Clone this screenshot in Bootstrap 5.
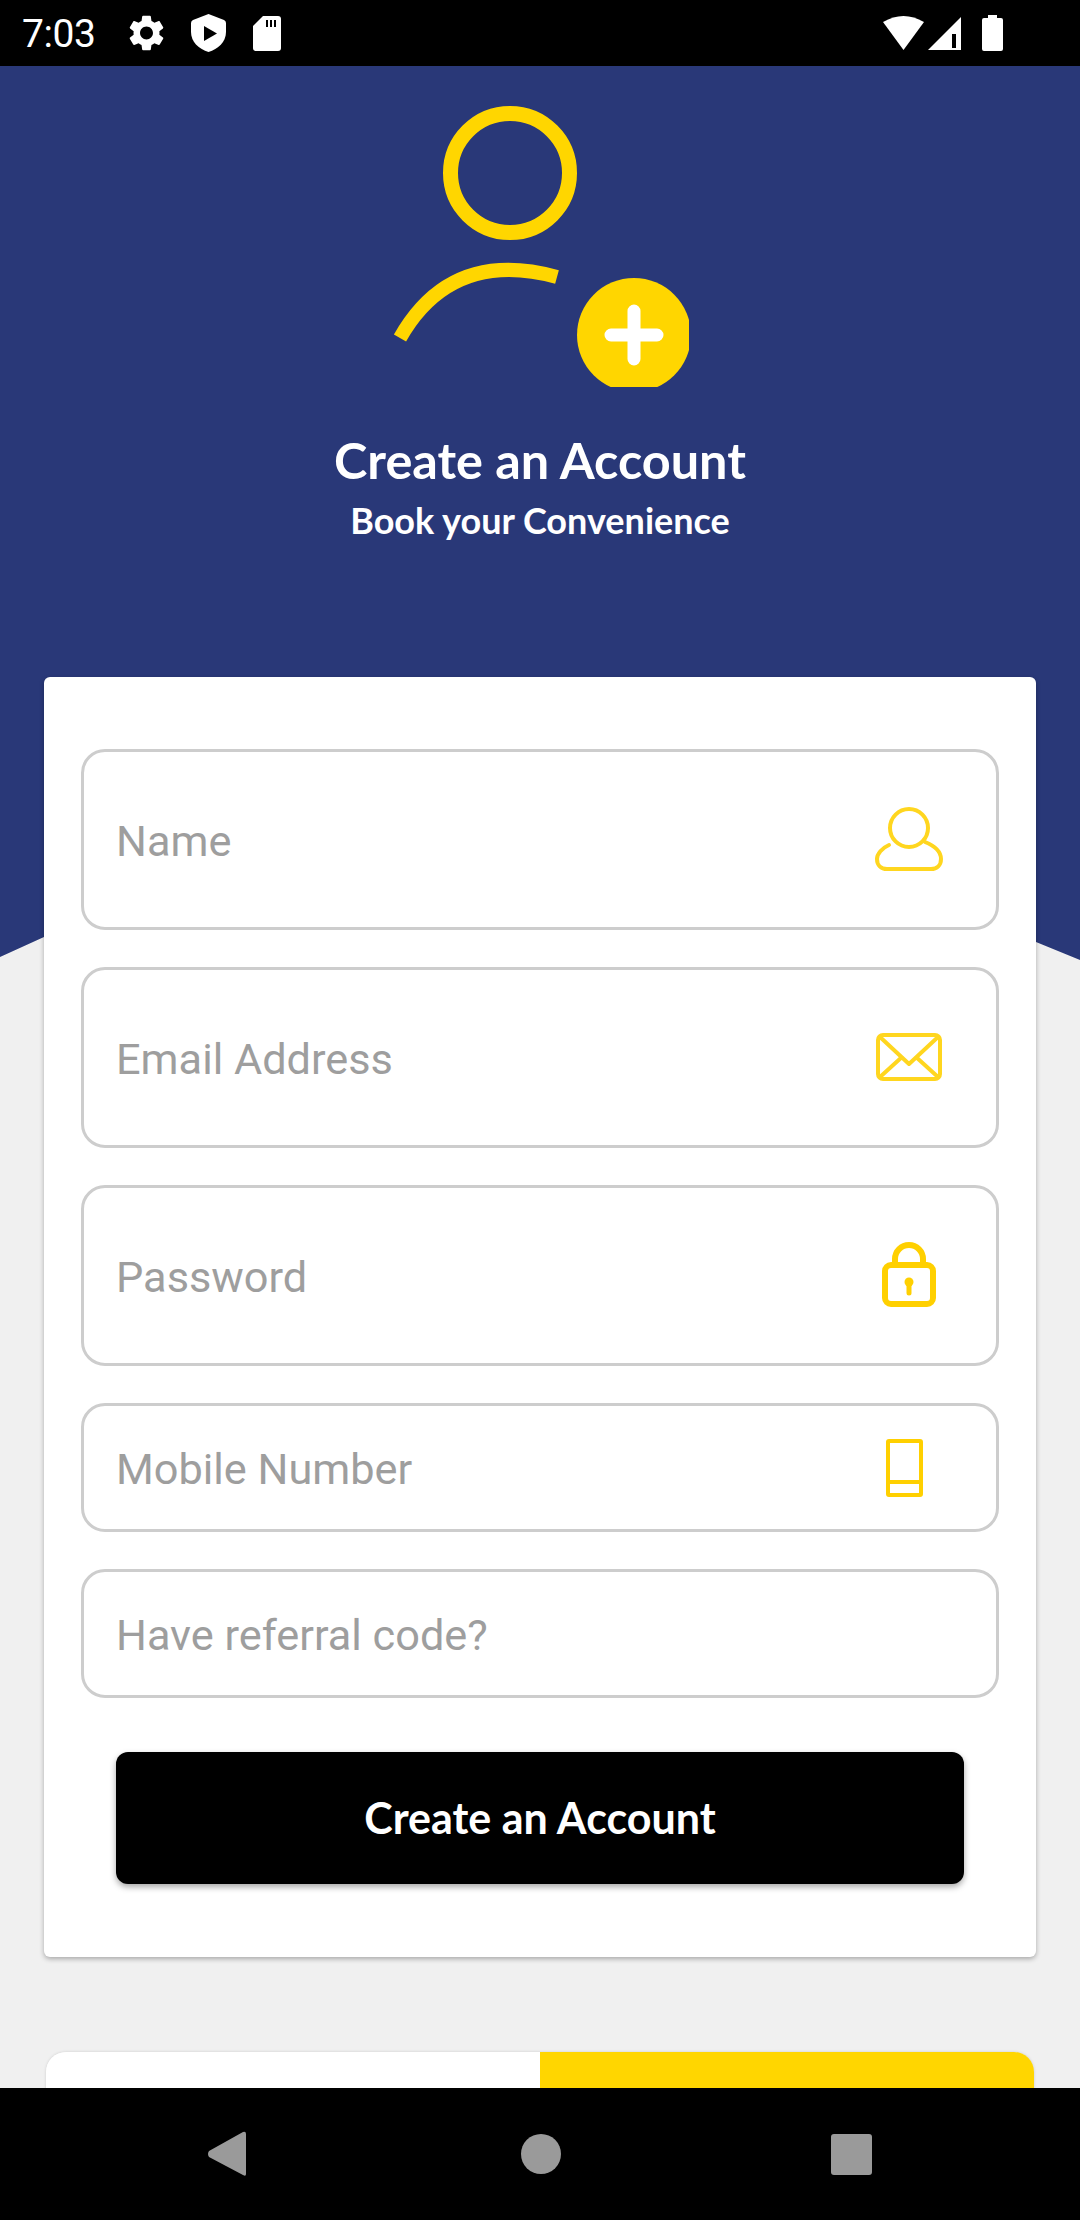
<!DOCTYPE html>
<html lang="en">
<head>
    <meta charset="UTF-8">
    <meta name="viewport" content="width=device-width, initial-scale=1.0">
    <title>Create an Account</title>
    <link rel="stylesheet" href="https://cdn.jsdelivr.net/npm/bootstrap@5.3.0/dist/css/bootstrap.min.css">
    <style>
        html, body { height: 100%; }
        body { background: #f0f0f0; font-family: Roboto, "Liberation Sans", sans-serif; overflow: hidden; }

        /* Android bars */
        .status-bar { height: 66px; padding: 0 77px 0 22px; background: #000; color: #fff; }
        .status-time { width: 73px; margin-right: 34px; padding-top: 2px; font-size: 39px; line-height: 1; letter-spacing: -.4px; }
        .status-left { gap: 27px; }
        .signal-icon { margin: 0 21px 0 4px; }
        .nav-bar { height: 132px; background: #000; }
        .nav-home { margin: 0 270px 0 275px; }

        /* Blue header with the curved cut at the bottom */
        .screen { min-height: 0; }
        .hero-band {
            height: 894px;
            padding-top: 34px;
            background: #293878;
            color: #fff;
            font-family: Lato, "Liberation Sans", sans-serif;
            clip-path: polygon(0 100%, 0 891px, 44px 871px, 540px 780px, 1036px 876px, 1080px 894px, 1080px 0, 0 0);
        }
        .hero-logo { display: block; margin: 0 auto; }
        .hero-title { margin: 46px 0 0; font-size: 50.4px; line-height: 54px; font-weight: 700; }
        .hero-sub { margin: 8px 0 0; font-size: 36px; line-height: 50px; font-weight: 700; }

        /* Form card */
        .form-panel {
            margin: -283px 44px 0;
            padding: 72px 37px 73px;
            border: 0;
            border-radius: 6px;
            box-shadow: 0 2px 5px rgba(0, 0, 0, .3);
        }
        .field-box {
            padding: 0 52px 0 32px;
            margin-bottom: 37px;
            border: 3px solid #cdcdcd;
            border-radius: 24px;
        }
        .field-tall { height: 181px; }
        .field-short { height: 129px; }
        .field-box .form-control {
            padding: 5px 0 0;
            background: transparent;
            border: 0;
            border-radius: 0;
            font-size: 43.3px;
            line-height: 50px;
            box-shadow: none;
        }
        .field-box .form-control::placeholder { color: #9e9e9e; opacity: 1; }
        .field-box svg { flex-shrink: 0; }
        .submit-btn {
            display: block;
            width: 848px;
            height: 132px;
            margin: 54px auto 0;
            padding: 0;
            background: #000;
            border: 0;
            border-radius: 12px;
            color: #fff;
            font-family: Lato, "Liberation Sans", sans-serif;
            font-size: 43px;
            font-weight: 700;
            box-shadow: 0 3px 6px rgba(0, 0, 0, .35);
        }

        /* Login / signup switch, cut off by the nav bar */
        .tab-switch { height: 200px; margin: 95px 46px 0; border-radius: 20px; overflow: hidden; box-shadow: 0 0 3px rgba(0, 0, 0, .15); }
        .tab-on { background: #ffd600; }
    </style>
</head>
<body class="d-flex flex-column">

<!-- Status bar -->
<div class="status-bar d-flex align-items-center flex-shrink-0">
    <span class="status-time">7:03</span>
    <div class="status-left d-flex align-items-center flex-grow-1">
        <svg width="35" height="36" viewBox="2.5 2 19 20" fill="#fff"><path d="M19.14 12.94c.04-.3.06-.61.06-.94 0-.32-.02-.64-.07-.94l2.03-1.58c.18-.14.23-.41.12-.61l-1.92-3.32c-.12-.22-.37-.29-.59-.22l-2.39.96c-.5-.38-1.03-.7-1.62-.94l-.36-2.54c-.04-.24-.24-.41-.48-.41h-3.84c-.24 0-.43.17-.47.41l-.36 2.54c-.59.24-1.13.57-1.62.94l-2.39-.96c-.22-.08-.47 0-.59.22L2.74 8.87c-.12.21-.08.47.12.61l2.03 1.58c-.05.3-.09.63-.09.94s.02.64.07.94l-2.03 1.58c-.18.14-.23.41-.12.61l1.92 3.32c.12.22.37.29.59.22l2.39-.96c.5.38 1.03.7 1.62.94l.36 2.54c.05.24.24.41.48.41h3.84c.24 0 .44-.17.47-.41l.36-2.54c.59-.24 1.13-.56 1.62-.94l2.39.96c.22.08.47 0 .59-.22l1.92-3.32c.12-.22.07-.47-.12-.61l-2.01-1.58zM12 15.6c-1.98 0-3.6-1.62-3.6-3.6s1.62-3.6 3.6-3.6 3.6 1.62 3.6 3.6-1.62 3.6-3.6 3.6z"/></svg>
        <svg width="35" height="38" viewBox="0 0 35 38"><path fill="#fff" d="M17.5 0 33 6q2 1 2 3v9c0 10-8 17-17.5 20C8 35 0 28 0 18V9q0-2 2-3z"/><path d="M13 12l13 7.5-13 7.5z" fill="#000"/></svg>
        <svg width="28" height="35" viewBox="0 0 28 35"><path fill="#fff" d="M10 0h15a3 3 0 0 1 3 3v29a3 3 0 0 1-3 3H3a3 3 0 0 1-3-3V10z"/><path stroke="#000" stroke-width="2" d="M14 4v7M18 4v7M22 4v7"/></svg>
    </div>
    <svg width="41" height="34" viewBox="0 0 41 34" fill="#fff"><path d="M0 6Q20.5-6 41 6L20.5 34z"/></svg>
    <svg class="signal-icon" width="33" height="33" viewBox="0 0 33 33"><path fill="#fff" d="M0 33 33 0v33z"/><path fill="#000" d="M24 17h4v14h-4z"/></svg>
    <svg width="21" height="36" viewBox="0 0 21 36" fill="#fff"><path d="M6 0h9v3h4a2 2 0 0 1 2 2v29a2 2 0 0 1-2 2H2a2 2 0 0 1-2-2V5a2 2 0 0 1 2-2h4z"/></svg>
</div>

<!-- Main screen -->
<div class="screen flex-grow-1 overflow-hidden">
    <div class="hero-band text-center">
        <svg class="hero-logo" width="298" height="287" viewBox="390 100 298 287">
            <circle cx="509" cy="173" r="59.5" fill="none" stroke="#ffd600" stroke-width="15"/>
            <path d="M399 338Q450 248 556 277" fill="none" stroke="#ffd600" stroke-width="14"/>
            <circle cx="633" cy="335" r="57" fill="#ffd600"/>
            <path d="M610 335h46M633 311v48" stroke="#fff" stroke-width="13" stroke-linecap="round"/>
        </svg>
        <h1 class="hero-title">Create an Account</h1>
        <p class="hero-sub">Book your Convenience</p>
    </div>

    <form class="card form-panel">
        <div class="field-box field-tall d-flex align-items-center">
            <input type="text" class="form-control" placeholder="Name">
            <svg width="70" height="66" viewBox="874 807 70 66" fill="none" stroke="#ffd61f" stroke-width="4" stroke-linecap="round">
                <circle cx="909" cy="828" r="19"/>
                <path d="M889 845c-7 3-12 9-12 14 0 6 4 10 10 10h44c6 0 10-4 10-10 0-7-6-13-16-17"/>
            </svg>
        </div>
        <div class="field-box field-tall d-flex align-items-center">
            <input type="email" class="form-control" placeholder="Email Address">
            <svg width="70" height="66" viewBox="874 1026 70 66" fill="none" stroke="#ffd61f" stroke-width="4" stroke-linejoin="round">
                <rect x="878" y="1036" width="62" height="44" rx="5"/>
                <path d="M880 1038l29 27 29-27M880 1078l22-20M938 1078l-22-20"/>
            </svg>
        </div>
        <div class="field-box field-tall d-flex align-items-center">
            <input type="password" class="form-control" placeholder="Password">
            <svg width="70" height="70" viewBox="874 1243 70 70" fill="none" stroke="#ffd000" stroke-width="6">
                <rect x="885" y="1267" width="48" height="39" rx="6"/>
                <path d="M895 1267v-6a14 14 0 0 1 28 0v6"/>
                <circle cx="909" cy="1284" r="4.5" fill="#ffd000" stroke="none"/>
                <path d="M909 1286v9" stroke-width="5" stroke-linecap="round"/>
            </svg>
        </div>
        <div class="field-box field-short d-flex align-items-center">
            <input type="tel" class="form-control" placeholder="Mobile Number">
            <svg width="70" height="66" viewBox="874 1436 70 66" fill="none" stroke="#ffd000" stroke-width="4">
                <rect x="888" y="1442" width="33" height="54" rx="1"/>
                <path d="M888 1483h33"/>
            </svg>
        </div>
        <div class="field-box field-short d-flex align-items-center mb-0">
            <input type="text" class="form-control" placeholder="Have referral code?">
        </div>
        <button type="button" class="btn submit-btn">Create an Account</button>
    </form>

    <div class="tab-switch d-flex">
        <div class="w-50 bg-white"></div>
        <div class="w-50 tab-on"></div>
    </div>
</div>

<!-- Navigation bar -->
<div class="nav-bar d-flex align-items-center justify-content-center flex-shrink-0">
    <svg width="38" height="46" viewBox="0 0 38 46" fill="#9a9a9a"><path d="M1 20 35 1q3-1 3 2v40q0 3-3 1L1 26q-2-3 0-6z"/></svg>
    <svg class="nav-home" width="40" height="40" viewBox="0 0 40 40" fill="#9a9a9a"><circle cx="20" cy="20" r="20"/></svg>
    <svg width="41" height="41" viewBox="0 0 41 41" fill="#9a9a9a"><rect width="41" height="41" rx="3"/></svg>
</div>

<script src="https://cdn.jsdelivr.net/npm/bootstrap@5.3.0/dist/js/bootstrap.bundle.min.js"></script>
</body>
</html>
